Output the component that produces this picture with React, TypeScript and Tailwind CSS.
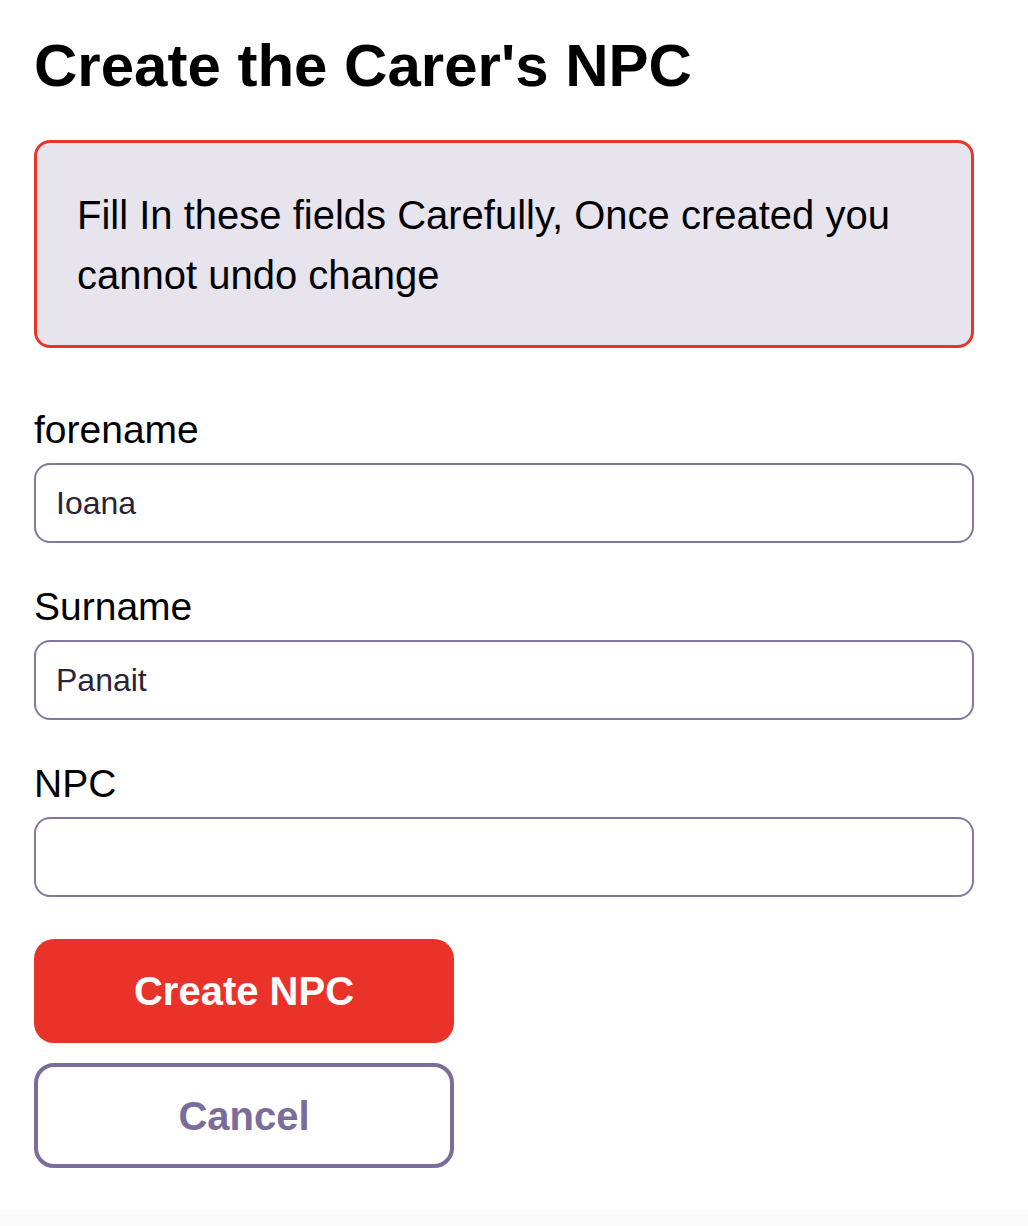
import React from "react";

export default function App() {
  return (
    <div className="min-h-screen bg-[#fafafa]" style={{ fontFamily: '"Liberation Sans", Arial, sans-serif' }}>
      <div className="bg-white h-[1210px] px-[34px] pt-[30px]">
        <h1 className="text-[60px] leading-[72px] font-bold text-black">Create the Carer's NPC</h1>

        <div className="mt-[38px] w-[940px] rounded-[16px] border-[3px] border-[#e8352a] bg-[#e7e4ee] pl-[40px] pr-[40px] pt-[42px] pb-[40px]">
          <p className="text-[40px] leading-[60px] text-black">
            Fill In these fields Carefully, Once created you cannot undo change
          </p>
        </div>

        <div className="mt-[59px] flex w-[940px] flex-col gap-[41px]">
          <Field label="forename" value="Ioana" />
          <Field label="Surname" value="Panait" />
          <Field label="NPC" value="" />
        </div>

        <div className="mt-[42px] flex w-[420px] flex-col gap-[20px]">
          <button className="h-[104px] w-full rounded-[20px] bg-[#e8322a] text-[40px] font-bold text-white">
            Create NPC
          </button>
          <button className="h-[105px] w-full rounded-[20px] border-[4px] border-[#7b6d9b] bg-white text-[40px] font-bold text-[#7b6d9b]">
            Cancel
          </button>
        </div>
      </div>
    </div>
  );
}

function Field({ label, value }: { label: string; value: string }) {
  return (
    <div className="flex flex-col">
      <label className="text-[39px] leading-[46px] text-black">{label}</label>
      <input
        readOnly
        value={value}
        className="mt-[10px] h-[80px] w-full rounded-[16px] border-2 border-[#857799] bg-white px-[20px] text-[32px] text-[#2a2438] outline-none"
        style={{ fontFamily: '"Liberation Sans", Arial, sans-serif' }}
      />
    </div>
  );
}
